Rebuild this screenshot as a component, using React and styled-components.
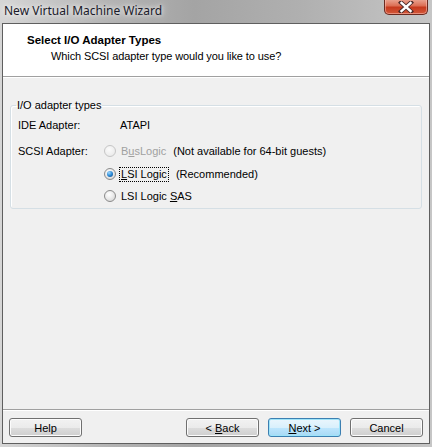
import React from "react";
import styled, { createGlobalStyle } from "styled-components";

const Global = createGlobalStyle`
  html, body { margin: 0; padding: 0; background: #c4c4c4; }
  body { font-family: "Liberation Sans", Arial, sans-serif; font-size: 11px; color: #000; }
`;

const Window = styled.div`
  width: 432px;
  height: 447px;
  box-sizing: border-box;
  display: flex;
  flex-direction: column;
  padding: 0 2px 3px 2px;
  background: linear-gradient(90deg, #d6d6d6 0%, #b4b4b4 25%, #a4a4a4 45%, #b0b0b0 70%, #c6c6c6 100%);
  position: relative;
`;

const TitleBar = styled.div`
  height: 23px;
  display: flex;
  align-items: center;
  padding-left: 2px;
  flex-shrink: 0;
`;

const TitleText = styled.span`
  font-family: "Noto Sans", "DejaVu Sans", sans-serif;
  font-size: 12px;
  color: #1a1a2a;
  text-shadow: 0 0 8px rgba(255,255,255,0.9), 0 0 4px rgba(255,255,255,0.8);
  margin-top: -3px;
`;

const CloseButton = styled.div`
  position: absolute;
  top: -1px;
  right: 4px;
  width: 44px;
  height: 16px;
  box-sizing: border-box;
  border: 1px solid #6a2a20;
  border-top: none;
  border-radius: 0 0 5px 5px;
  background: linear-gradient(180deg, #eba896 0%, #dc6f55 45%, #c63a1e 55%, #d2583a 100%);
  box-shadow: inset 0 0 0 1px rgba(255,200,190,0.5);
  display: flex;
  align-items: center;
  justify-content: center;
`;

const Client = styled.div`
  flex: 1;
  display: flex;
  flex-direction: column;
  border: 1px solid #5f5f5f;
  background: #f0f0f0;
  min-height: 0;
`;

const Header = styled.div`
  height: 53px;
  background: #fff;
  border-bottom: 1px solid #a0a0a0;
  box-shadow: 0 1px 0 #fff;
  display: flex;
  flex-direction: column;
  padding: 9px 0 0 24px;
  box-sizing: border-box;
  flex-shrink: 0;
`;

const HeaderTitle = styled.div`
  font-weight: bold;
  font-size: 11.5px;
  line-height: 14px;
`;

const HeaderSub = styled.div`
  margin-top: 2px;
  padding-left: 24px;
  line-height: 14px;
  letter-spacing: -0.1px;
`;

const Body = styled.div`
  flex: 1;
  padding: 21px 7px 0 7px;
  margin-top: 1px;
`;

const Group = styled.fieldset`
  margin: 0;
  padding: 4px 0 0 7px;
  height: 110px;
  box-sizing: border-box;
  border: 1px solid #d5dfe5;
  border-radius: 3px;
  box-shadow: inset 1px 1px 0 #fff;
  display: flex;
  flex-direction: column;
`;

const Legend = styled.legend`
  padding: 0 1px;
  margin-left: -2px;
  line-height: 12px;
`;

const Row = styled.div`
  display: flex;
  align-items: center;
  height: ${p => p.$h || 22}px;
  margin-top: ${p => p.$mt || 0}px;
`;

const Label = styled.span`
  width: ${p => p.$w || 86}px;
  flex-shrink: 0;
`;

const Radio = styled.span`
  width: 12px;
  height: 12px;
  border-radius: 50%;
  box-sizing: border-box;
  border: 1px solid ${p => (p.$disabled ? "#c6c6c6" : "#8a8a8a")};
  background: ${p =>
    p.$disabled
      ? "radial-gradient(circle at 40% 35%, #fbfbfb, #e6e6e6)"
      : "radial-gradient(circle at 40% 35%, #ffffff 0%, #eeeeee 40%, #cfcfcf 100%)"};
  display: inline-flex;
  align-items: center;
  justify-content: center;
  margin-right: 3px;
  flex-shrink: 0;
  &::after {
    content: "";
    display: ${p => (p.$checked ? "block" : "none")};
    width: 6px;
    height: 6px;
    border-radius: 50%;
    background: radial-gradient(circle at 35% 30%, #9fd8ff 0%, #2b8ad6 50%, #0d3f7a 100%);
  }
`;

const OptionText = styled.span`
  color: ${p => (p.$disabled ? "#a0a0a0" : "#000")};
  border: 1px dotted ${p => (p.$focus ? "#000" : "transparent")};
  padding: 0 1px;
  line-height: 13px;
`;

const Note = styled.span`
  margin-left: ${p => p.$ml || 6}px;
`;

const Footer = styled.div`
  height: 34px;
  border-top: 1px solid #a0a0a0;
  box-shadow: inset 0 1px 0 #fff;
  display: flex;
  align-items: flex-start;
  padding: 8px 6px 0 6px;
  box-sizing: border-box;
  flex-shrink: 0;
`;

const Button = styled.button`
  width: 73px;
  height: 19px;
  box-sizing: border-box;
  padding: 0;
  margin-left: ${p => p.$ml || 0}px;
  font-family: inherit;
  font-size: 11px;
  color: #000;
  border: 1px solid ${p => (p.$default ? "#3c7fb1" : "#707070")};
  border-radius: 3px;
  background: ${p =>
    p.$default
      ? "linear-gradient(180deg, #eaf6fd 0%, #d9f0fc 50%, #bee6fd 51%, #a7d9f5 100%)"
      : "linear-gradient(180deg, #f2f2f2 0%, #ebebeb 50%, #dddddd 51%, #cfcfcf 100%)"};
  box-shadow: inset 0 0 0 1px ${p => (p.$default ? "#9ee4f9" : "#fcfcfc")};
  display: flex;
  align-items: center;
  justify-content: center;
  white-space: pre;
`;

const Spacer = styled.div`
  flex: 1;
`;

const U = styled.span`
  text-decoration: underline;
`;

export default function App() {
  return (
    <>
      <Global />
      <Window>
        <TitleBar>
          <TitleText>New Virtual Machine Wizard</TitleText>
        </TitleBar>
        <CloseButton>
          <svg width="16" height="12" viewBox="0 0 16 12">
            <path d="M3 1.5 L13 10.5 M13 1.5 L3 10.5" stroke="#4a2a2a" strokeWidth="4.2" strokeLinecap="square" />
            <path d="M3.5 2 L12.5 10 M12.5 2 L3.5 10" stroke="#ffffff" strokeWidth="2.4" strokeLinecap="square" />
          </svg>
        </CloseButton>
        <Client>
          <Header>
            <HeaderTitle>Select I/O Adapter Types</HeaderTitle>
            <HeaderSub>Which SCSI adapter type would you like to use?</HeaderSub>
          </Header>
          <Body>
            <Group>
              <Legend>I/O adapter types</Legend>
              <Row $h={20}>
                <Label $w={102}>IDE Adapter:</Label>
                <span>ATAPI</span>
              </Row>
              <Row $h={25} $mt={5}>
                <Label>SCSI Adapter:</Label>
                <Radio $disabled />
                <OptionText $disabled>
                  B<U>u</U>sLogic
                </OptionText>
                <Note $ml={5}>(Not available for 64-bit guests)</Note>
              </Row>
              <Row $h={22}>
                <Label />
                <Radio $checked />
                <OptionText $focus>
                  <U>L</U>SI Logic
                </OptionText>
                <Note $ml={7}>(Recommended)</Note>
              </Row>
              <Row $h={24}>
                <Label />
                <Radio />
                <OptionText>
                  LSI Logic <U>S</U>AS
                </OptionText>
              </Row>
            </Group>
          </Body>
          <Footer>
            <Button>Help</Button>
            <Spacer />
            <Button>
              {"< "}
              <U>B</U>ack
            </Button>
            <Button $ml={9} $default>
              <U>N</U>
              {"ext >"}
            </Button>
            <Button $ml={9}>Cancel</Button>
          </Footer>
        </Client>
      </Window>
    </>
  );
}
